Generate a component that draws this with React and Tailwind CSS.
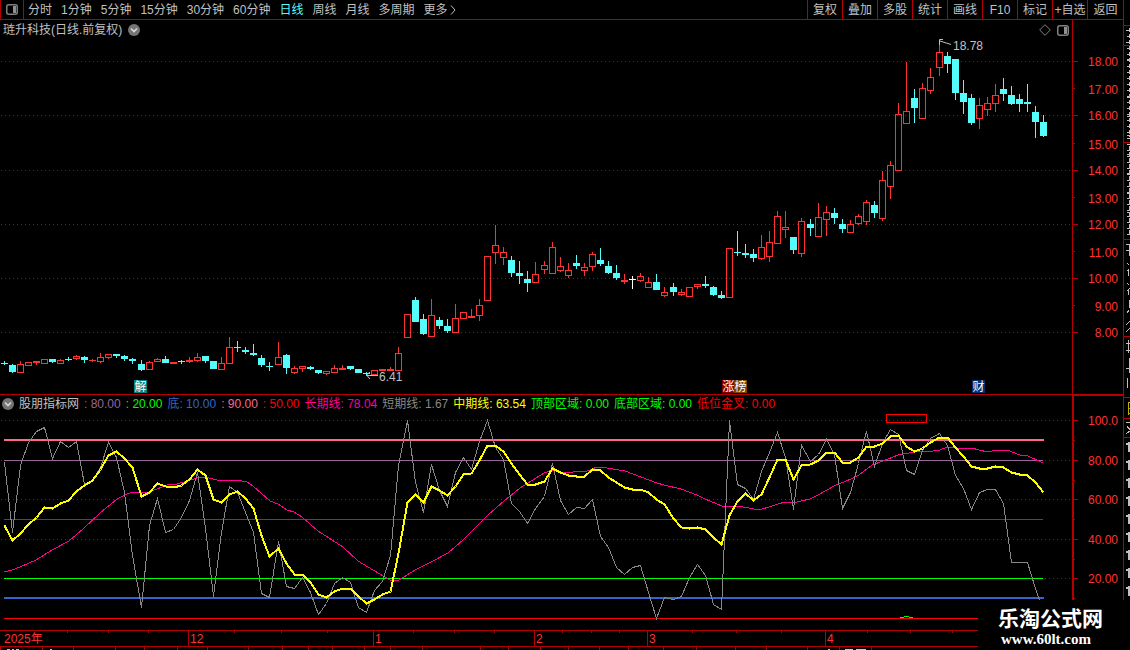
import { Fragment } from "react";

const RED = "#ff3232";
const LINE = "#b40000";
const CYAN = "#54fcfc";

const periods = [
  "分时", "1分钟", "5分钟", "15分钟", "30分钟", "60分钟", "日线", "周线", "月线", "多周期",
];

const tools = ["复权", "叠加", "多股", "统计", "画线", "F10", "标记", "+自选", "返回"];

const legend = [
  { text: ": 80.00", color: "text-[#996699]" },
  { text: ": 20.00", color: "text-[#00ff00]" },
  { text: "底: 10.00", color: "text-[#3366cc]" },
  { text: ": 90.00", color: "text-[#ff6690]" },
  { text: ": 50.00", color: "text-[#ff0000]" },
  { text: "长期线: 78.04", color: "text-[#ff0090]" },
  { text: "短期线: 1.67", color: "text-[#888888]" },
  { text: "中期线: 63.54", color: "text-[#ffff00]" },
  { text: "顶部区域: 0.00", color: "text-[#00ff00]" },
  { text: "底部区域: 0.00", color: "text-[#00ff00]" },
  { text: "低位金叉: 0.00", color: "text-[#ff0000]" },
];

// kind (r hollow, f filled red, c cyan, w white), high, body top, body bottom, low
const candles = [
  ["c", 361, 363, 364, 365], ["c", 364, 365, 372, 373], ["r", 361, 364, 373, 373],
  ["r", 362, 362, 366, 366], ["f", 361, 361, 363, 365], ["r", 359, 359, 364, 364],
  ["c", 359, 359, 362, 363], ["r", 359, 360, 364, 364], ["c", 357, 359, 360, 361],
  ["r", 355, 356, 359, 360], ["c", 356, 357, 360, 363], ["f", 359, 360, 361, 362],
  ["r", 353, 357, 362, 363], ["r", 354, 354, 358, 359], ["c", 354, 354, 356, 358],
  ["c", 355, 356, 359, 361], ["c", 358, 359, 361, 364], ["c", 360, 364, 370, 371],
  ["r", 361, 362, 370, 370], ["r", 358, 359, 362, 362], ["c", 356, 359, 363, 363],
  ["f", 362, 362, 364, 364], ["c", 360, 361, 362, 364], ["f", 357, 360, 362, 363],
  ["r", 353, 357, 361, 362], ["c", 356, 356, 361, 363], ["c", 361, 361, 369, 369],
  ["r", 357, 363, 370, 370], ["r", 337, 347, 364, 364], ["c", 341, 347, 348, 352],
  ["c", 347, 350, 352, 354], ["c", 344, 353, 355, 356], ["c", 355, 358, 365, 367],
  ["c", 362, 366, 367, 371], ["r", 342, 357, 365, 365], ["c", 354, 355, 368, 374],
  ["r", 366, 368, 373, 374], ["r", 366, 366, 369, 372], ["c", 366, 367, 369, 370],
  ["c", 370, 370, 373, 374], ["r", 371, 371, 374, 375], ["r", 365, 368, 373, 373],
  ["f", 365, 368, 370, 370], ["c", 366, 366, 369, 370], ["c", 369, 369, 373, 373],
  ["c", 372, 373, 374, 375], ["r", 370, 370, 375, 375], ["f", 369, 369, 371, 371],
  ["f", 367, 369, 371, 371], ["r", 347, 353, 371, 371], ["r", 314, 314, 338, 338],
  ["c", 297, 300, 322, 322], ["c", 314, 319, 334, 335], ["r", 299, 315, 337, 337],
  ["c", 317, 320, 326, 329], ["c", 319, 326, 331, 333], ["r", 304, 318, 333, 333],
  ["r", 312, 312, 319, 319], ["f", 309, 316, 318, 318], ["r", 299, 305, 316, 321],
  ["r", 256, 256, 301, 301], ["r", 225, 245, 253, 264], ["r", 247, 252, 258, 265],
  ["c", 256, 260, 273, 277], ["c", 261, 273, 276, 284], ["c", 271, 279, 283, 292],
  ["r", 262, 274, 283, 283], ["r", 261, 265, 270, 274], ["r", 242, 247, 274, 274],
  ["r", 257, 266, 271, 272], ["r", 263, 270, 276, 278], ["c", 255, 263, 266, 269],
  ["r", 263, 267, 271, 276], ["r", 252, 254, 267, 271], ["c", 248, 260, 264, 266],
  ["c", 261, 266, 273, 274], ["c", 265, 273, 278, 280], ["f", 274, 280, 282, 284],
  ["w", 276, 279, 280, 289], ["r", 273, 276, 281, 282], ["r", 277, 282, 288, 288],
  ["c", 274, 282, 290, 290], ["r", 287, 292, 296, 297], ["c", 283, 287, 292, 296],
  ["r", 289, 292, 295, 296], ["r", 287, 287, 297, 297], ["r", 284, 284, 287, 289],
  ["c", 276, 284, 286, 288], ["c", 286, 287, 295, 296], ["c", 291, 295, 298, 299],
  ["r", 248, 248, 298, 298], ["c", 231, 252, 253, 256], ["c", 244, 253, 255, 258],
  ["c", 249, 254, 258, 262], ["r", 235, 247, 259, 260], ["r", 231, 242, 257, 262],
  ["r", 211, 216, 244, 244], ["r", 211, 227, 230, 238], ["c", 237, 237, 250, 254],
  ["r", 218, 221, 254, 257], ["c", 219, 224, 228, 236], ["r", 203, 217, 237, 237],
  ["r", 206, 212, 220, 236], ["c", 208, 213, 218, 224], ["c", 219, 224, 229, 233],
  ["r", 220, 224, 233, 233], ["r", 214, 216, 224, 225], ["r", 200, 202, 222, 225],
  ["c", 201, 205, 213, 218], ["r", 171, 180, 219, 221], ["r", 161, 165, 187, 199],
  ["r", 103, 114, 171, 171], ["r", 62, 111, 124, 124], ["c", 89, 98, 108, 123],
  ["r", 83, 88, 119, 119], ["r", 68, 77, 91, 94], ["r", 42, 52, 68, 76],
  ["c", 52, 56, 64, 73], ["c", 59, 59, 93, 100], ["c", 80, 93, 102, 114],
  ["c", 94, 98, 123, 125], ["r", 98, 105, 119, 129], ["r", 97, 103, 110, 116],
  ["r", 84, 95, 104, 112], ["c", 78, 89, 94, 101], ["c", 86, 95, 104, 105],
  ["c", 94, 99, 104, 112], ["c", 84, 102, 104, 112], ["c", 106, 112, 122, 138],
  ["c", 115, 122, 136, 137],
];

const shortLine = [
  462, 532, 465, 442, 431, 427, 458, 441, 447, 441, 484, 480, 467, 442, 457, 492, 555, 607, 525,
  498, 532, 529, 517, 500, 472, 528, 596, 532, 486, 492, 512, 532, 593, 597, 541, 586, 588, 577,
  592, 614, 603, 583, 577, 582, 607, 612, 590, 581, 555, 465, 420, 482, 512, 464, 490, 506, 472,
  457, 469, 441, 420, 447, 459, 503, 511, 523, 508, 496, 463, 500, 514, 507, 508, 499, 536, 547,
  567, 574, 567, 565, 592, 618, 597, 599, 596, 577, 564, 575, 604, 609, 420, 484, 488, 499, 471,
  452, 432, 457, 509, 445, 461, 454, 439, 454, 508, 492, 463, 431, 466, 443, 429, 434, 470, 474,
  450, 438, 433, 445, 475, 488, 509, 492, 489, 489, 503, 562, 562, 562, 588, 612,
];

const midLine = [
  525, 540, 533, 524, 517, 507, 508, 503, 500, 491, 485, 480, 469, 455, 451, 458, 467, 496, 492,
  483, 486, 487, 485, 479, 469, 475, 499, 502, 494, 491, 498, 508, 535, 556, 548, 563, 574, 574,
  582, 594, 597, 591, 588, 588, 596, 603, 599, 594, 591, 553, 502, 494, 502, 486, 490, 495, 486,
  474, 473, 460, 445, 445, 451, 463, 474, 484, 484, 481, 468, 472, 475, 476, 476, 469, 470, 477,
  482, 487, 489, 489, 492, 499, 504, 518, 527, 528, 527, 529, 537, 544, 515, 501, 493, 500, 494,
  477, 459, 459, 479, 465, 464, 460, 452, 452, 462, 462, 457, 446, 446, 443, 436, 435, 446, 451,
  448, 442, 437, 437, 447, 456, 466, 468, 468, 466, 467, 472, 474, 475, 482, 492,
];

const longLine =
  "4,572 12,570 20,567 36,560 52,550 69,541 83,529 100,513 117,499 127,494 133,492 141,493 149,492 157,489 167,485 177,484 187,481 197,478 205,477 217,480 237,480 247,482 253,486 270,501 278,504 287,510 294,512 302,517 318,531 343,547 358,561 373,570 390,580 399,580 407,575 415,570 431,562 448,553 463,540 477,526 488,515 504,501 520,488 536,478 544,473 552,470 561,472 569,473 577,471 585,472 597,467 607,468 625,471 641,477 657,483 664,485 681,489 697,495 705,499 722,506 738,506 754,509 762,509 769,507 778,504 785,502 793,503 801,501 810,499 818,495 834,486 851,479 859,475 872,465 883,461 898,455 914,452 933,451 940,450 947,447 955,448 972,448 979,450 988,452 996,450 1007,450 1020,455 1028,456 1043,463";

const prices = [
  ["18.00", 61, 62], ["17.00", 88, 90], ["16.00", 115, 116], ["15.00", 143, 145],
  ["14.00", 170, 171], ["13.00", 197, 199], ["12.00", 224, 225], ["11.00", 251, 253],
  ["10.00", 278, 279], ["9.00", 305, 307], ["8.00", 332, 333],
];

const levels = [["100.0", 420], ["80.00", 460], ["60.00", 499], ["40.00", 539], ["20.00", 578]];

const months = [["12", 188], ["1", 373], ["2", 534], ["3", 647], ["4", 825]];
const weekTicks = [
  67, 108, 148, 234, 281, 327, 413, 454, 494, 562, 591, 619, 692, 736, 781, 867, 910, 952,
];
const footTicks = [
  0, 42, 73, 115, 144, 177, 207, 248, 282, 308, 332, 364, 390, 422, 480, 508, 540, 568, 599, 628,
  663, 696, 735, 766, 807, 839, 871,
];

// 8px per bar, with one spare pixel every 16-17 bars
const xAt = (i) => 4 + i * 8 + Math.floor(i / 16.57);
const toPoints = (list) => list.map((y, i) => `${xAt(i) + 0.5},${y + 0.5}`).join(" ");

const Candle = ({ index, data }) => {
  const [kind, high, top, bottom, low] = data;
  const x = xAt(index);
  const color = kind === "c" ? CYAN : kind === "w" ? "#ffffff" : RED;
  return (
    <g fill={color}>
      {top > high && <rect x={x} y={high} width="1" height={top - high} />}
      {low > bottom && <rect x={x} y={bottom} width="1" height={low - bottom} />}
      {kind === "r" ? (
        <rect x={x - 2.5} y={top + 0.5} width="6" height={bottom - top - 1} fill="none" stroke={color} />
      ) : (
        <rect x={x - 3} y={top} width="7" height={bottom - top} />
      )}
    </g>
  );
};

const PanelIcon = () => (
  <svg width="12" height="11" viewBox="0 0 12 11" fill="none" aria-hidden="true">
    <rect x="0.75" y="0.75" width="10.5" height="9.5" rx="2" stroke="#808080" strokeWidth="1.5" />
    <rect x="7" y="2" width="3" height="7" fill="#909090" />
  </svg>
);

const ChevronBadge = () => (
  <svg width="12" height="12" viewBox="0 0 12 12" fill="none" aria-hidden="true">
    <circle cx="6" cy="6" r="6" fill="#747474" />
    <path d="M3 4.5 6 7.5 9 4.5" stroke="#d8d8d8" strokeWidth="1.6" />
  </svg>
);

const Marker = ({ x, char, fill }) => (
  <g>
    <rect x={x} y="380" width="13" height="13" fill={fill} />
    <text x={x + 0.5} y="391" fill="#ffffff" fontSize="12">{char}</text>
  </g>
);

const Toolbar = () => (
  <header className="flex h-5 items-stretch border-b border-[#b40000]">
    <button aria-label="侧栏" className="flex w-6 items-center justify-center border-x border-[#b40000]">
      <PanelIcon />
    </button>
    <nav className="flex flex-1 items-center gap-[9px] pl-1">
      {periods.map((name) => (
        <button key={name} className={name === "日线" ? "text-[#54fcfc]" : ""}>
          {name}
        </button>
      ))}
      <button className="flex items-center">
        更多
        <svg width="9" height="10" viewBox="0 0 9 10" fill="none" aria-hidden="true">
          <path d="M3 0.5 7 5 3 9.5" stroke="#c0c0c0" />
        </svg>
      </button>
    </nav>
    <div className="flex">
      {tools.map((name) => (
        <button
          key={name}
          className="w-[35px] border-l border-[#b40000] text-center whitespace-nowrap last:w-9"
        >
          {name}
        </button>
      ))}
    </div>
  </header>
);

const PriceChart = () => (
  <section>
    <div className="flex h-5">
      <div className="flex flex-1 items-center gap-[6px] border-r border-[#b40000] pr-[3px] pl-[3px]">
        <h1>琏升科技(日线.前复权)</h1>
        <ChevronBadge />
        <div className="ml-auto flex items-center gap-[6px]">
          <svg width="12" height="12" viewBox="0 0 12 12" fill="none" aria-hidden="true">
            <path d="M6 0.7 11.3 6 6 11.3 0.7 6Z" stroke="#808080" />
          </svg>
          <PanelIcon />
        </div>
      </div>
      <div className="w-[50px]" />
    </div>
    <svg viewBox="0 40 1123 354" className="block h-auto w-full overflow-visible">
      <g shapeRendering="crispEdges">
        {prices.map(([label, y], i) => (
          <Fragment key={label}>
            {i % 2 === 0 && (
              <line x1="1" x2="1072" y1={y + 0.5} y2={y + 0.5} stroke={LINE} strokeDasharray="1 3" />
            )}
            <rect x="1073" y={y} width={i % 2 === 0 ? 5 : 2} height="1" fill={LINE} />
          </Fragment>
        ))}
        <rect x="1072" y="40" width="1" height="354" fill={LINE} />
        {candles.map((data, i) => (
          <Candle key={i} index={i} data={data} />
        ))}
      </g>
      {prices.map(([label, , y]) => (
        <text key={label} x="1118" y={y + 4} textAnchor="end" fontSize="12" fill={RED}>
          {label}
        </text>
      ))}
      <g stroke="#c0c0c0" fill="none">
        <path d="M951 44.5 940 41M943 39.5H939.5V45" />
        <path d="M378 375.5H366M370 372 366.5 375 370 379" />
      </g>
      <text x="953" y="50" fontSize="12" fill="#c0c0c0">18.78</text>
      <text x="379" y="381" fontSize="12" fill="#c0c0c0">6.41</text>
      <Marker x={134} char="解" fill="#008080" />
      <Marker x={722} char="涨" fill="#800000" />
      <Marker x={734} char="榜" fill="#804000" />
      <Marker x={972} char="财" fill="#003070" />
    </svg>
  </section>
);

const IndicatorChart = () => (
  <section className="border-t border-[#b40000]">
    <div className="flex h-[18px]">
      <div className="flex flex-1 items-center gap-[5px] pl-[2px] whitespace-nowrap">
        <ChevronBadge />
        <h2>股朋指标网</h2>
        {legend.map(({ text, color }) => (
          <span key={text} className={color}>
            {text}
          </span>
        ))}
      </div>
      <div className="w-[51px] border-t border-l-2 border-[#b40000]" />
    </div>
    <svg viewBox="0 413 1123 217" className="block h-auto w-full overflow-hidden">
      <g shapeRendering="crispEdges">
        {levels.map(([label, y]) => (
          <Fragment key={label}>
            <line x1="1" x2="1072" y1={y + 0.5} y2={y + 0.5} stroke={LINE} strokeDasharray="1 3" />
            <rect x="1073" y={y} width="5" height="1" fill={LINE} />
            <rect x="1073" y={y + 20} width="2" height="1" fill={LINE} />
          </Fragment>
        ))}
        <rect x="1072" y="413" width="2" height="217" fill={LINE} />
        <rect x="4" y="439" width="1040" height="2" fill="#ff6690" />
        <rect x="4" y="460" width="1039" height="1" fill="#996699" />
        <rect x="4" y="519" width="1039" height="1" fill="#ff0000" />
        <rect x="4" y="578" width="1039" height="1" fill="#00ff00" />
        <rect x="4" y="597" width="1040" height="2" fill="#3366cc" />
        <rect x="4" y="618" width="1039" height="1" fill="#ff0000" />
        <rect x="886.5" y="414.5" width="40" height="8" fill="none" stroke="#ff0000" />
        <path d="M900 617.5H904M904 616.5H909M909 617.5H913" stroke="#00ff00" />
      </g>
      <g fill="none" shapeRendering="crispEdges">
        <polyline points={longLine} stroke="#ff0090" />
        <polyline points={toPoints(shortLine)} stroke="#888888" />
        <polyline points={toPoints(midLine)} stroke="#ffff00" strokeWidth="2" />
      </g>
      {levels.map(([label, y]) => (
        <text key={label} x="1118" y={y + 5} textAnchor="end" fontSize="12" fill={RED}>
          {label}
        </text>
      ))}
    </svg>
  </section>
);

const DateAxis = () => (
  <svg viewBox="0 630 1123 20" className="block h-auto w-full">
    <g fill={LINE} shapeRendering="crispEdges">
      <rect x="0" y="630" width="1123" height="1" />
      <rect x="0" y="646" width="1123" height="1" />
      {months.map(([label, x]) => (
        <rect key={label} x={x} y="630" width="1" height="16" />
      ))}
      {weekTicks.map((x) => (
        <rect key={x} x={x} y="631" width="1" height="2" />
      ))}
      {footTicks.map((x) => (
        <rect key={x} x={x} y="647" width="1" height="3" />
      ))}
      <path d="M7 649.5H10M12 649.5H14M16 649.5H19M50 649.5H52M828 649.5H830" stroke="#c0c0c0" />
      <path d="M845 649.5H853M856 649.5H866" stroke={CYAN} />
    </g>
    <text x="4" y="643" fontSize="12" fill={RED}>2025年</text>
    {months.map(([label, x]) => (
      <text key={label} x={x + 2} y="643" fontSize="12" fill={RED}>
        {label}
      </text>
    ))}
  </svg>
);

// sliver of the quote panel that sits past the right edge
const SidePanel = () => (
  <aside className="w-[7px] shrink-0 overflow-hidden border-l border-[#b40000]">
    <svg width="6" height="650" viewBox="1124 0 6 650" shapeRendering="crispEdges" aria-hidden="true">
      <g fill={LINE}>
        {[25, 45, 142, 239, 336, 397, 418, 437].map((y) => (
          <rect key={y} x="1124" y={y} width="6" height="1" />
        ))}
      </g>
      <g stroke="#c0c0c0" fill="none">
        <path d="M1129.5 28V137M1129.5 146V236" strokeDasharray="4 2" />
        <path d="M1126 30.5H1130M1126 42.5H1130M1127 36.5H1130" />
        <path d="M1128.5 48V236" strokeWidth="3" strokeDasharray="1 5" />
        <path d="M1127 59.5H1130M1127 78.5H1130M1127 97.5H1130M1127 116.5H1130M1127 135.5H1130M1127 154.5H1130M1127 173.5H1130M1127 193.5H1130M1127 212.5H1130" />
        <path d="M1126 244.5H1130M1126 250.5H1130M1129.5 244V256M1127 263l2 2M1127 271l2-2M1128.5 270V276M1127 283l2 2M1127 291l3-3M1128.5 290V295M1129.5 300V308M1127 313l2-3M1126 325l4-4M1126 332l4-4" />
        <path d="M1126 343.5H1130M1126 350.5H1130M1128.5 340V353M1129.5 358V373M1126 368.5H1130M1127.5 378V388" />
        <path d="M1126 422.5H1130M1127 426l3 4M1126 434l4-3" />
      </g>
      <path d="M1130 402.5H1128.5V415M1128 408.5H1130M1128 413.5H1130" stroke="#b4b400" fill="none" />
      <g fill="#c0c0c0">
        {[442, 460, 478, 496, 514, 532, 550, 568, 586].map((y) => (
          <path key={y} d={`M1128 ${y}h2v10h-2v-7h-2v-2h2z`} />
        ))}
      </g>
    </svg>
  </aside>
);

const App = () => {
  return (
    <div className="relative flex min-h-screen overflow-hidden bg-black font-['Liberation_Sans','Noto_Sans_CJK_SC',sans-serif] text-[12px] leading-4 text-[#c0c0c0]">
      <main className="min-w-0 flex-1">
        <Toolbar />
        <PriceChart />
        <IndicatorChart />
        <DateAxis />
      </main>
      <SidePanel />
      <a
        href="#home"
        className="absolute right-0 bottom-0 flex h-[50px] w-[152px] flex-col bg-black pt-2 pl-5 font-bold text-white"
      >
        <span className="text-[21px] leading-[22px]">乐淘公式网</span>
        <span className="pl-[3px] font-['Liberation_Serif',serif] text-[15px] leading-[18px]">
          www.60lt.com
        </span>
      </a>
    </div>
  );
};

export default App;
